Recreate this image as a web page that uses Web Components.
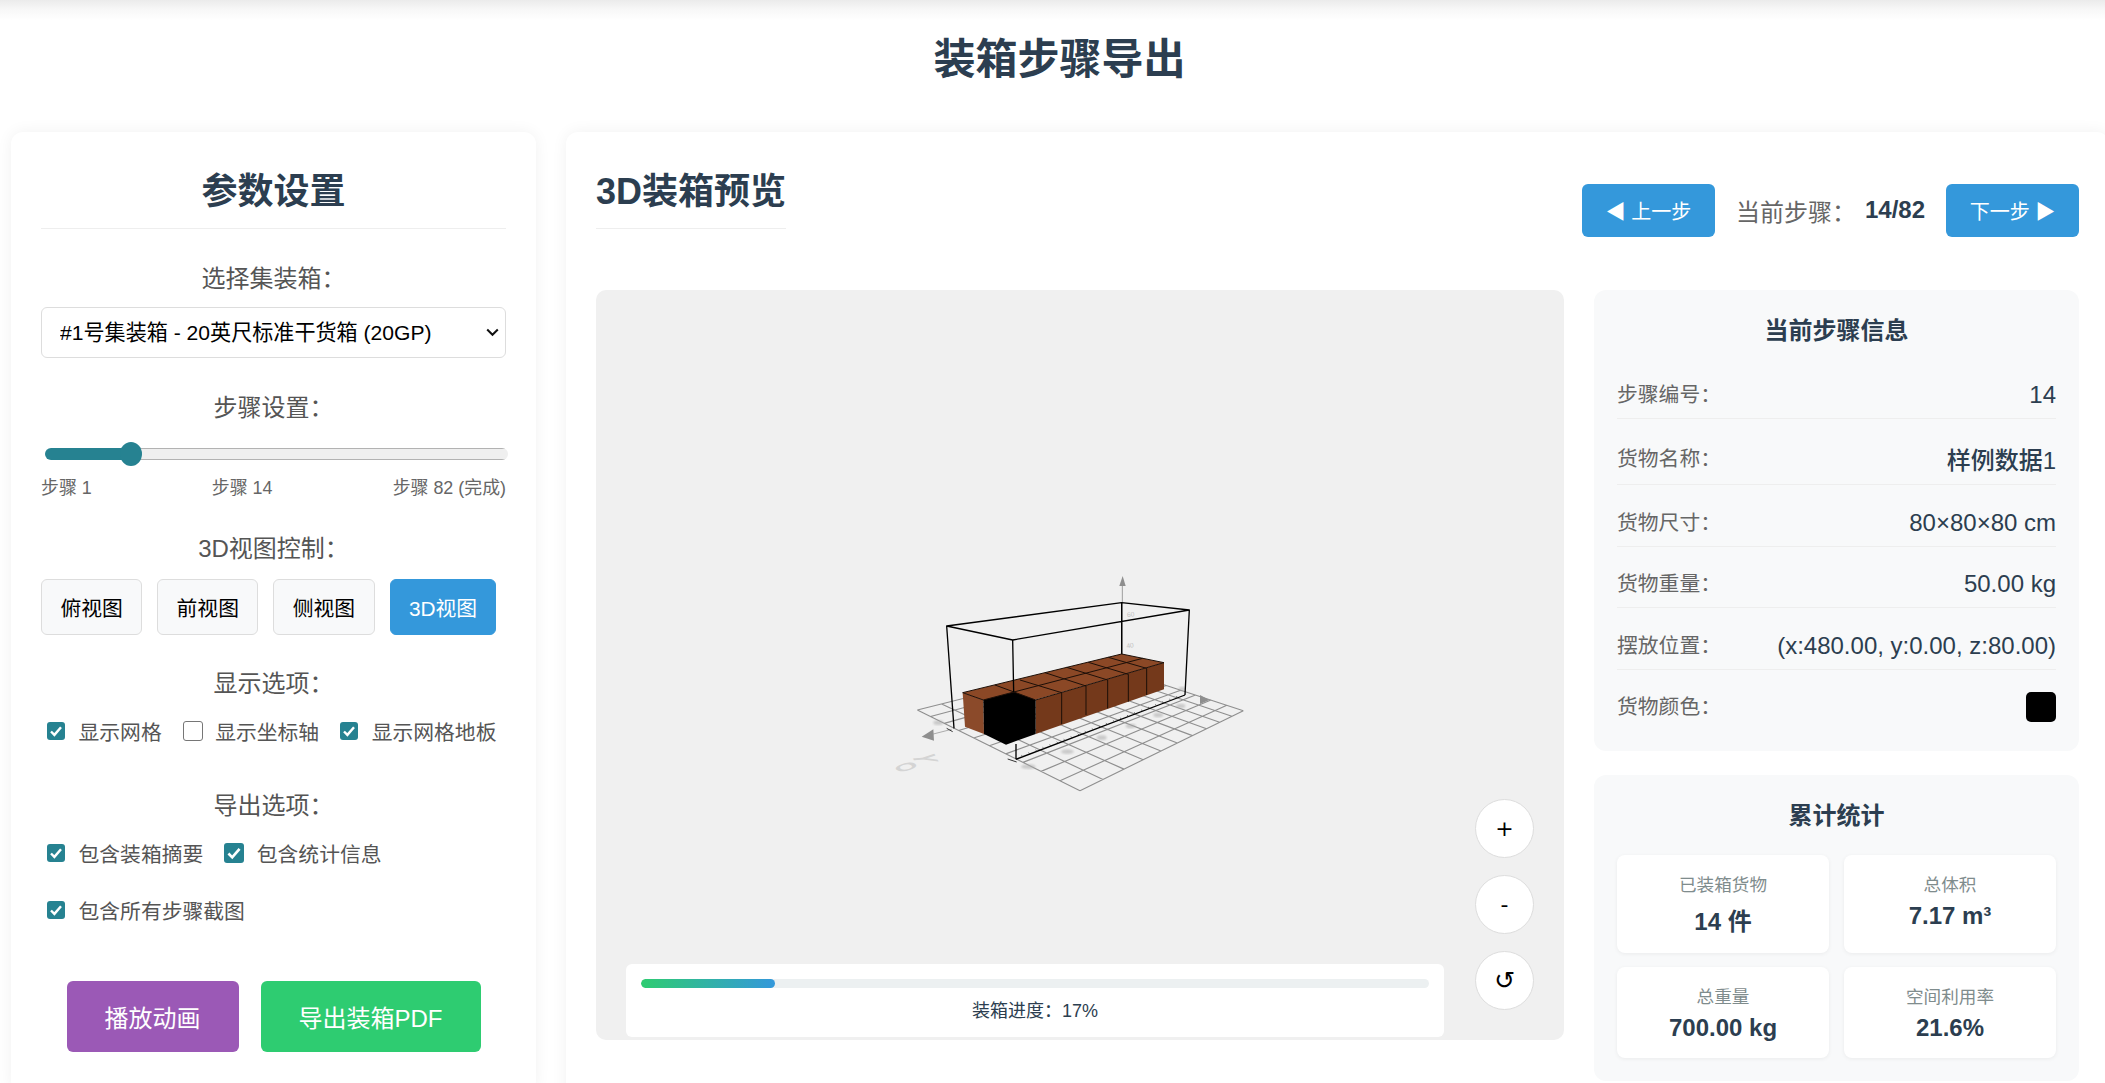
<!DOCTYPE html>
<html lang="zh-CN">
<head>
<meta charset="utf-8">
<title>装箱步骤导出</title>
<style>
  html, body { margin: 0; overflow: hidden; height: 1083px; background: #fff; }
  body { width: 2119px; font-family: "Liberation Sans", "Noto Sans CJK SC", sans-serif; color: #2c3e50; }
</style>
</head>
<body>
  <page-title>装箱步骤导出</page-title>

  <page-layout>
    <side-panel slot="side" heading="参数设置">
      <control-group label="选择集装箱：">
        <box-select></box-select>
      </control-group>

      <control-group label="步骤设置：" style="margin-top:35px">
        <step-slider></step-slider>
      </control-group>

      <control-group label="3D视图控制：" style="margin-top:35px" gap="15">
        <button-row>
          <view-button>俯视图</view-button>
          <view-button>前视图</view-button>
          <view-button>侧视图</view-button>
          <view-button active>3D视图</view-button>
        </button-row>
      </control-group>

      <control-group label="显示选项：" style="margin-top:34px" gap="17">
        <option-list>
          <check-option checked>显示网格</check-option>
          <check-option big>显示坐标轴</check-option>
          <check-option checked>显示网格地板</check-option>
        </option-list>
      </control-group>

      <control-group label="导出选项：" style="margin-top:45px" gap="17">
        <option-list>
          <check-option checked>包含装箱摘要</check-option>
          <check-option checked big>包含统计信息</check-option>
          <check-option checked>包含所有步骤截图</check-option>
        </option-list>
      </control-group>

      <action-row>
        <action-button color="#9b59b6">播放动画</action-button>
        <action-button color="#2ecc71">导出装箱PDF</action-button>
      </action-row>
    </side-panel>

    <preview-panel slot="main">
      <step-nav slot="nav"></step-nav>
      <preview-stage slot="stage"></preview-stage>

      <info-box slot="info" heading="当前步骤信息">
        <info-row label="步骤编号：">14</info-row>
        <info-row label="货物名称：">样例数据1</info-row>
        <info-row label="货物尺寸：">80×80×80 cm</info-row>
        <info-row label="货物重量：">50.00 kg</info-row>
        <info-row label="摆放位置：">(x:480.00, y:0.00, z:80.00)</info-row>
        <info-row label="货物颜色：" last><color-swatch color="#000"></color-swatch></info-row>
      </info-box>

      <info-box slot="info" heading="累计统计">
        <stat-grid>
          <stat-tile label="已装箱货物">14 件</stat-tile>
          <stat-tile label="总体积">7.17 m³</stat-tile>
          <stat-tile label="总重量">700.00 kg</stat-tile>
          <stat-tile label="空间利用率">21.6%</stat-tile>
        </stat-grid>
      </info-box>
    </preview-panel>
  </page-layout>

<script>
;(function scriptLoaded() {
  "use strict"

  // every element renders once, from its attributes, when it joins the page
  class Base extends HTMLElement {
    connectedCallback() {
      if (this.shadowRoot) { return }
      this.attachShadow({ mode: "open" })
      this.shadowRoot.innerHTML = this.render()
    }
  }

  const define = (name, render) => {
    customElements.define(name, class extends Base {
      render() { return render(this) }
    })
  }


  define("page-title", () => `
    <style>
      :host {
        display: block;
        height: 132px;
        background: linear-gradient(#ebebeb, #f8f8f8 10px, #fff 20px);
        box-sizing: border-box;
        padding-top: 35px;
        text-align: center;
      }
      h1 { margin: 0; font-size: 42px; line-height: 50px; font-weight: 700; }
    </style>
    <h1><slot></slot></h1>
  `)


  define("page-layout", () => `
    <style>
      :host {
        display: grid;
        grid-template-columns: 525px 1543px;
        gap: 30px;
        padding: 0 10px 0 11px;
        align-items: start;
      }
    </style>
    <slot name="side"></slot>
    <slot name="main"></slot>
  `)


  define("side-panel", el => `
    <style>
      :host {
        display: block;
        background: #fff;
        border-radius: 12px;
        box-shadow: 0 0 16px rgba(0,0,0,.06);
        padding: 30px 30px 40px;
      }
      h2 {
        margin: 0 0 35px;
        font-size: 36px;
        line-height: 56px;
        padding: 2px 0 8px;
        border-bottom: 1px solid #eee;
        text-align: center;
      }
    </style>
    <h2>${el.getAttribute("heading")}</h2>
    <slot></slot>
  `)


  define("control-group", el => `
    <style>
      :host { display: block; }
      .label {
        font-size: 24px;
        line-height: 30px;
        color: #555;
        text-align: center;
        margin-bottom: ${el.getAttribute("gap") || 13}px;
      }
    </style>
    <div class="label">${el.getAttribute("label")}</div>
    <slot></slot>
  `)


  define("box-select", () => `
    <style>
      :host { display: block; position: relative; }
      select {
        -webkit-appearance: none;
        appearance: none;
        display: block;
        width: 100%;
        height: 51px;
        box-sizing: border-box;
        padding: 0 30px 0 18px;
        font: inherit;
        font-size: 21.1px;
        color: #000;
        background: #fff;
        border: 1px solid #ddd;
        border-radius: 6px;
      }
      svg { position: absolute; right: 7px; top: 21px; width: 13px; height: 9px; pointer-events: none; }
    </style>
    <select><option>#1号集装箱 - 20英尺标准干货箱 (20GP)</option></select>
    <svg viewBox="0 0 13 9"><path d="M1.2 1.5l5.3 5.3 5.3-5.3" fill="none" stroke="#111" stroke-width="2"/></svg>
  `)


  define("step-slider", () => `
    <style>
      :host { display: block; padding-top: 6px; }
      input {
        -webkit-appearance: none;
        appearance: none;
        display: block;
        width: 463px;
        height: 24px;
        margin: 0 0 0 4px;
        background: none;
      }
      input::-webkit-slider-runnable-track {
        height: 12px;
        border-radius: 6px;
        background:
          linear-gradient(to right, #268291 86px, transparent 86px),
          linear-gradient(#b2b2b2 1px, #efefef 1px, #efefef 11px, #b2b2b2 11px);
      }
      input::-webkit-slider-thumb {
        -webkit-appearance: none;
        width: 22px;
        height: 24px;
        margin-top: -6px;
        border-radius: 50%;
        background: #268291;
      }
      .marks {
        display: flex;
        justify-content: space-between;
        margin-top: 11px;
        font-size: 17.9px;
        line-height: 22px;
        color: #666;
      }
    </style>
    <input type="range" min="0" max="82" value="14">
    <div class="marks"><span>步骤 1</span><span>步骤 14</span><span>步骤 82 (完成)</span></div>
  `)


  define("button-row", () => `
    <style>
      :host { display: flex; gap: 15px; }
    </style>
    <slot></slot>
  `)


  define("view-button", el => `
    <style>
      :host { display: block; }
      button {
        height: 56px;
        padding: 0 18.4px;
        font: inherit;
        font-size: 20.8px;
        color: ${el.hasAttribute("active") ? "#fff" : "#000"};
        background: ${el.hasAttribute("active") ? "#3498db" : "#f8f9fa"};
        border: 1px solid ${el.hasAttribute("active") ? "#3498db" : "#ddd"};
        border-radius: 6px;
      }
    </style>
    <button><slot></slot></button>
  `)


  define("option-list", () => `
    <style>
      :host { display: flex; flex-wrap: wrap; gap: 27px 15px; }
    </style>
    <slot></slot>
  `)


  define("check-option", el => {
    const size = el.hasAttribute("big") ? 20 : 18
    const on = el.hasAttribute("checked")
    return `
    <style>
      :host {
        display: inline-flex;
        align-items: center;
        gap: ${el.hasAttribute("big") ? 12.5 : 13.5}px;
        padding-left: 6px;
        height: 30px;
        font-size: 20.8px;
        color: #555;
      }
      .box {
        box-sizing: border-box;
        width: ${size}px;
        height: ${size}px;
        border-radius: 3px;
        background: ${on ? "#268291" : "#fff"};
        border: ${on ? "0" : "1.5px solid #767676"};
      }
      svg { display: block; width: 100%; height: 100%; }
    </style>
    <span class="box" role="checkbox" aria-checked="${on}">
      ${on ? `<svg viewBox="0 0 18 18"><path d="M4 9.5l3.4 3.4L14 5.2" fill="none" stroke="#fff" stroke-width="2.4"/></svg>` : ""}
    </span>
    <slot></slot>
  `})


  define("action-row", () => `
    <style>
      :host { display: flex; justify-content: center; gap: 22px; margin-top: 56px; }
    </style>
    <slot></slot>
  `)


  define("action-button", el => `
    <style>
      :host { display: block; }
      button {
        height: 71px;
        padding: 0 38px;
        font: inherit;
        font-size: 24px;
        color: #fff;
        background: ${el.getAttribute("color")};
        border: 0;
        border-radius: 6px;
      }
    </style>
    <button><slot></slot></button>
  `)


  define("preview-panel", () => `
    <style>
      :host {
        display: block;
        background: #fff;
        border-radius: 12px;
        box-shadow: 0 0 16px rgba(0,0,0,.06);
        padding: 30px;
      }
      .head { display: flex; justify-content: space-between; align-items: flex-start; height: 128px; }
      h2 {
        margin: 0;
        font-size: 36px;
        line-height: 56px;
        padding: 2px 0 8px;
        border-bottom: 1px solid #eee;
      }
      .nav { padding-top: 22px; }
      .body { display: grid; grid-template-columns: 968px 485px; gap: 30px; align-items: start; }
      .info { display: flex; flex-direction: column; gap: 24px; }
    </style>
    <div class="head">
      <h2>3D装箱预览</h2>
      <div class="nav"><slot name="nav"></slot></div>
    </div>
    <div class="body">
      <slot name="stage"></slot>
      <div class="info"><slot name="info"></slot></div>
    </div>
  `)


  define("step-nav", () => `
    <style>
      :host { display: flex; align-items: center; gap: 21px; }
      button {
        width: 133px;
        height: 52.5px;
        padding: 0;
        font: inherit;
        font-size: 20px;
        color: #fff;
        background: #3498db;
        border: 0;
        border-radius: 6px;
      }
      .now { font-size: 24px; color: #666; display: flex; gap: 9px; align-items: center; }
      b { color: #2c3e50; }
    </style>
    <button>◀ 上一步</button>
    <div class="now"><span>当前步骤：</span><b>14/82</b></div>
    <button>下一步 ▶</button>
  `)


  // floor grid: a perspective map of the unit square onto its four corners,
  // all coordinates are in 3x units of the drawing
  function floorGrid(n) {
    const [x0, y0, x1, y1, x2, y2, x3, y3] = [172, 510, 660, 752, 1150, 512, 722, 372]
    const dx1 = x1 - x2, dx2 = x3 - x2, sx = x0 - x1 + x2 - x3
    const dy1 = y1 - y2, dy2 = y3 - y2, sy = y0 - y1 + y2 - y3
    const den = dx1 * dy2 - dx2 * dy1
    const g = (sx * dy2 - dx2 * sy) / den
    const h = (dx1 * sy - sx * dy1) / den
    const a = x1 - x0 + g * x1, b = x3 - x0 + h * x3
    const d = y1 - y0 + g * y1, e = y3 - y0 + h * y3
    const at = (u, v) => {
      const w = g * u + h * v + 1
      return ((a * u + b * v + x0) / w).toFixed(1) + " " + ((d * u + e * v + y0) / w).toFixed(1)
    }

    let path = ""
    for (let i = 0; i <= n; i++) {
      path += `M${at(i / n, 0)}L${at(i / n, 1)}M${at(0, i / n)}L${at(1, i / n)}`
    }
    return path
  }


  // small marks along the bottom front edge of the container
  function edgeTicks() {
    let path = ""
    for (let i = 1; i < 24; i++) {
      const x = 468 + 507 * i / 24
      const y = 658 - 193 * i / 24
      path += `M${x.toFixed(1)} ${y.toFixed(1)}l-5 -4`
    }
    return path
  }


  function sceneSvg() {
    const blurs = [[505, 680, 44], [622, 635, 38], [725, 593, 30], [812, 558, 30], [895, 525, 30], [962, 498, 28], [235, 548, 30], [966, 447, 20]]
      .map(([x, y, w]) => `<ellipse cx="${x}" cy="${y}" rx="${w / 2}" ry="7" fill="#aaa" opacity=".55" filter="url(#soft)"/>`)
      .join("")

    return `
    <svg viewBox="0 0 968 750" aria-hidden="true">
      <defs><filter id="soft"><feGaussianBlur stdDeviation="3"/></filter></defs>
      <g transform="translate(264 250) scale(.33333)" stroke-linejoin="round">
        <path d="${floorGrid(10)}" fill="none" stroke="#8f8f8f" stroke-width="3.4"/>
        ${blurs}

        <text transform="matrix(.97 -.34 .44 .3 120 700)" font-size="80" font-weight="700" font-family="Liberation Sans" fill="#d4d4d4">O</text>
        <text transform="matrix(.25 .47 -1.25 .1 154 646)" font-size="80" font-weight="700" font-family="Liberation Sans" fill="#d4d4d4">Y</text>
        <text transform="translate(802 232) rotate(-8)" font-size="20" font-family="Liberation Sans" fill="#c0c0c0">60</text>
        <text transform="translate(800 325) rotate(-8)" font-size="20" font-family="Liberation Sans" fill="#c0c0c0">40</text>

        <path d="M787 345V135" stroke="#888" stroke-width="2.4"/>
        <path d="M778 138h19l-9 -30z" fill="#8e8e8e"/>
        <path d="M220 582L275 568" stroke="#888" stroke-width="2"/>
        <path d="M185 590L220 568L222 602z" fill="#8e8e8e"/>
        <path d="M1020 465L1048 480L1020 492z" fill="#8e8e8e"/>

        <path d="M260 258L458 300L988 210L785 188Z M260 258L282 565 M785 188V345 M988 210L975 465"
          fill="none" stroke="#000" stroke-width="4"/>
        <path d="M260 565L278 575" stroke="#333" stroke-width="3"/>

        <path d="M308 458L785 342L912 368L437 505Z" fill="#8b4826"/>
        <path d="M308 458L370 480L372 582L315 560Z" fill="#8b4a2a"/>
        <path d="M527 480L912 368V448L527 582Z" fill="#74391b"/>
        <path d="M370 480L462 456L527 480V582L438 614L372 582Z" fill="#000"/>

        <path d="M370 480L848 355 M405 435L462 456 M480 420L605 458 M555 398L678 438 M620 382L743 420 M685 367L805 403 M745 352L860 385
                 M462 456L527 480L912 368 M308 458L785 342L912 368
                 M605 458V552 M678 438V525 M743 420V505 M805 403V485 M860 385V465
                 M308 458L370 480"
          fill="none" stroke="#1c0f08" stroke-width="3"/>

        <path d="M458 300L461 456 M468 612V658 M468 658L975 465" fill="none" stroke="#000" stroke-width="4"/>
        <path d="M443 657L470 666" stroke="#333" stroke-width="3"/>
        <path d="${edgeTicks()}" stroke="#333" stroke-width="2"/>
      </g>
    </svg>
  `}


  define("preview-stage", () => `
    <style>
      :host {
        display: block;
        position: relative;
        height: 750px;
        background: #f0f0f0;
        border-radius: 10px;
      }
      svg { display: block; width: 100%; height: 100%; }
      .controls {
        position: absolute;
        right: 30px;
        bottom: 30px;
        display: flex;
        flex-direction: column;
        gap: 17px;
      }
      .controls button {
        width: 59px;
        height: 59px;
        padding: 0;
        border: 1px solid #ddd;
        border-radius: 50%;
        background: #fff;
        font-family: "DejaVu Sans", sans-serif;
        font-size: 22px;
        color: #000;
      }
      .controls button.reset { font-size: 25px; }
      .progress {
        position: absolute;
        left: 30px;
        bottom: 3px;
        width: 818px;
        height: 73px;
        box-sizing: border-box;
        padding: 15px;
        background: #fff;
        border-radius: 6px;
      }
      .track { height: 9px; border-radius: 5px; background: #ecf0f1; overflow: hidden; }
      .fill { width: 17%; height: 100%; border-radius: 5px; background: linear-gradient(90deg, #2ecc71, #3498db); }
      .text { margin-top: 11px; line-height: 25px; font-size: 18px; text-align: center; color: #2c3e50; }
    </style>
    ${sceneSvg()}
    <div class="controls">
      <button>+</button>
      <button>-</button>
      <button class="reset">↺</button>
    </div>
    <div class="progress">
      <div class="track"><div class="fill"></div></div>
      <div class="text">装箱进度：17%</div>
    </div>
  `)


  define("info-box", el => `
    <style>
      :host {
        display: block;
        background: #f8f9fa;
        border-radius: 12px;
        padding: 23px;
      }
      h3 {
        margin: 0 0 8px;
        font-size: 24px;
        line-height: 36px;
        text-align: center;
      }
    </style>
    <h3>${el.getAttribute("heading")}</h3>
    <slot></slot>
  `)


  define("info-row", el => `
    <style>
      :host {
        display: flex;
        justify-content: space-between;
        align-items: center;
        padding: 22.5px 0 ${el.hasAttribute("last") ? 6 : 8}px;
        border-bottom: ${el.hasAttribute("last") ? "0" : "1px solid #eee"};
      }
      .key { font-size: 20.8px; line-height: 30px; color: #666; }
      .val { font-size: 24px; font-weight: 500; color: #2c3e50; }
    </style>
    <span class="key">${el.getAttribute("label")}</span>
    <span class="val"><slot></slot></span>
  `)


  define("color-swatch", el => `
    <style>
      :host {
        display: block;
        width: 30px;
        height: 30px;
        border-radius: 5px;
        background: ${el.getAttribute("color")};
      }
    </style>
  `)


  define("stat-grid", () => `
    <style>
      :host { display: grid; grid-template-columns: 1fr 1fr; gap: 14px 15px; margin-top: 21px; }
    </style>
    <slot></slot>
  `)


  define("stat-tile", el => `
    <style>
      :host {
        display: block;
        padding: 16px 10px;
        background: #fff;
        border-radius: 8px;
        box-shadow: 0 1px 4px rgba(0,0,0,.06);
        text-align: center;
      }
      .name { font-size: 17.6px; color: #7f8c8d; margin-bottom: 6px; }
      .num { font-size: 24px; font-weight: 700; color: #2c3e50; }
    </style>
    <div class="name">${el.getAttribute("label")}</div>
    <div class="num"><slot></slot></div>
  `)
})()
</script>
</body>
</html>
